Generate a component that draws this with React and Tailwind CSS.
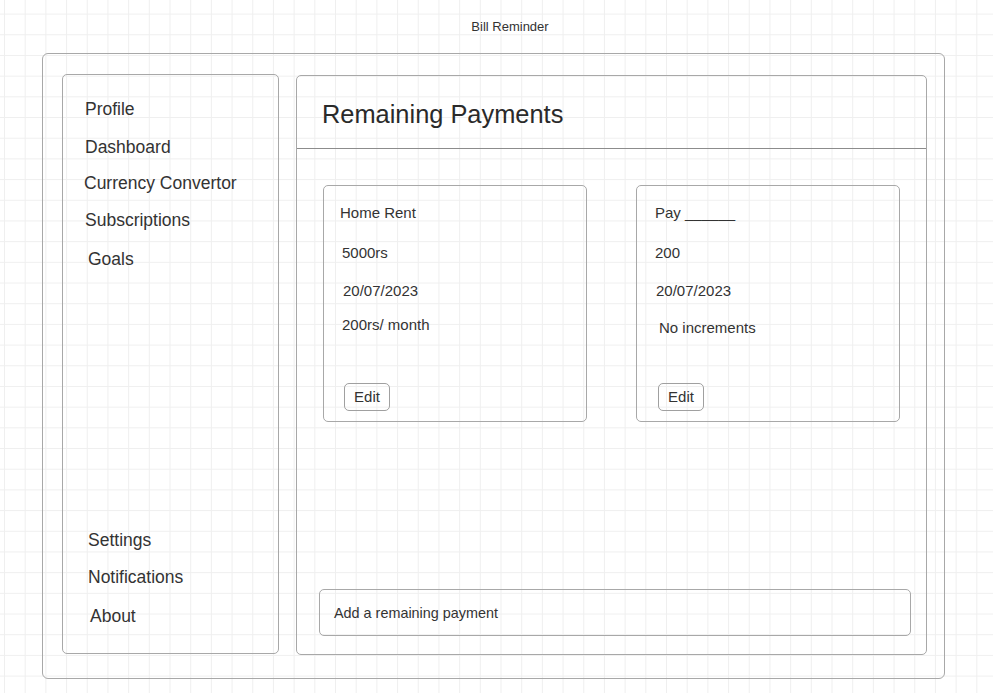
export default function App() {
  const topNav = [
    { label: "Profile", cls: "mt-[24px] pl-[22px]" },
    { label: "Dashboard", cls: "mt-[18px] pl-[22px]" },
    { label: "Currency Convertor", cls: "mt-[16px] pl-[21px]" },
    { label: "Subscriptions", cls: "mt-[17px] pl-[22px]" },
    { label: "Goals", cls: "mt-[19px] pl-[25px]" },
  ];
  const bottomNav = [
    { label: "Settings", cls: "pl-[25px]" },
    { label: "Notifications", cls: "mt-[17px] pl-[25px]" },
    { label: "About", cls: "mt-[19px] pl-[27px]" },
  ];

  return (
    <div className="w-[993px] h-[693px] overflow-hidden bg-white bg-[linear-gradient(to_right,#efefef_1px,transparent_1px),linear-gradient(to_bottom,#efefef_1px,transparent_1px)] bg-[length:20.7px_20.7px] bg-[position:4px_13.6px] font-['Liberation_Sans',Arial,sans-serif] text-[#333]">
      <div className="pt-[19px] pl-[27px] text-center text-[13px] leading-[16px]">Bill Reminder</div>

      <div className="mt-[18px] ml-[42px] w-[903px] h-[626px] border border-[#a8a8a8] rounded-[6px] flex pl-[19px] pt-[20px] gap-[17px]">
        {/* sidebar */}
        <div className="w-[217px] h-[580px] border border-[#a8a8a8] rounded-[5px] flex flex-col justify-between text-[17.5px] leading-[20px]">
          <div className="flex flex-col">
            {topNav.map((item) => (
              <div key={item.label} className={item.cls}>{item.label}</div>
            ))}
          </div>
          <div className="flex flex-col pb-[27px]">
            {bottomNav.map((item) => (
              <div key={item.label} className={item.cls}>{item.label}</div>
            ))}
          </div>
        </div>

        {/* main */}
        <div className="mt-[1px] w-[631px] h-[580px] border border-[#a8a8a8] rounded-[5px] flex flex-col">
          <div className="h-[73px] border-b border-[#8c8c8c] pl-[25px] pt-[23px] text-[25.4px] leading-[30px] text-[#2a2a2a]">
            Remaining Payments
          </div>

          <div className="flex pl-[26px] pt-[36px] gap-[49px] text-[15px] leading-[18px]">
            <PaymentCard
              rows={[
                { text: "Home Rent", cls: "pl-[16px]" },
                { text: "5000rs", cls: "mt-[22px] pl-[18px]" },
                { text: "20/07/2023", cls: "mt-[20px] pl-[19px]" },
                { text: "200rs/ month", cls: "mt-[16px] pl-[18px]" },
              ]}
              editCls="mt-[49px] ml-[20px]"
            />
            <PaymentCard
              rows={[
                { text: "Pay ______", cls: "pl-[18px]" },
                { text: "200", cls: "mt-[22px] pl-[18px]" },
                { text: "20/07/2023", cls: "mt-[20px] pl-[19px]" },
                { text: "No increments", cls: "mt-[19px] pl-[22px]" },
              ]}
              editCls="mt-[46px] ml-[21px]"
            />
          </div>

          <div className="flex-1" />

          <div className="ml-[22px] mr-[15px] mb-[18px] h-[47px] border border-[#a8a8a8] rounded-[5px] flex items-center pl-[14px] pt-[2px] text-[14.4px]">
            Add a remaining payment
          </div>
        </div>
      </div>
    </div>
  );
}

function PaymentCard({ rows, editCls }) {
  return (
    <div className="w-[264px] h-[237px] border border-[#a8a8a8] rounded-[5px] pt-[18px] flex flex-col items-start">
      {rows.map((r) => (
        <div key={r.text} className={r.cls}>{r.text}</div>
      ))}
      <button className={`${editCls} w-[46px] h-[28px] border border-[#a0a0a0] rounded-[5px] text-[15px] leading-[18px] text-[#333] bg-transparent`}>
        Edit
      </button>
    </div>
  );
}
